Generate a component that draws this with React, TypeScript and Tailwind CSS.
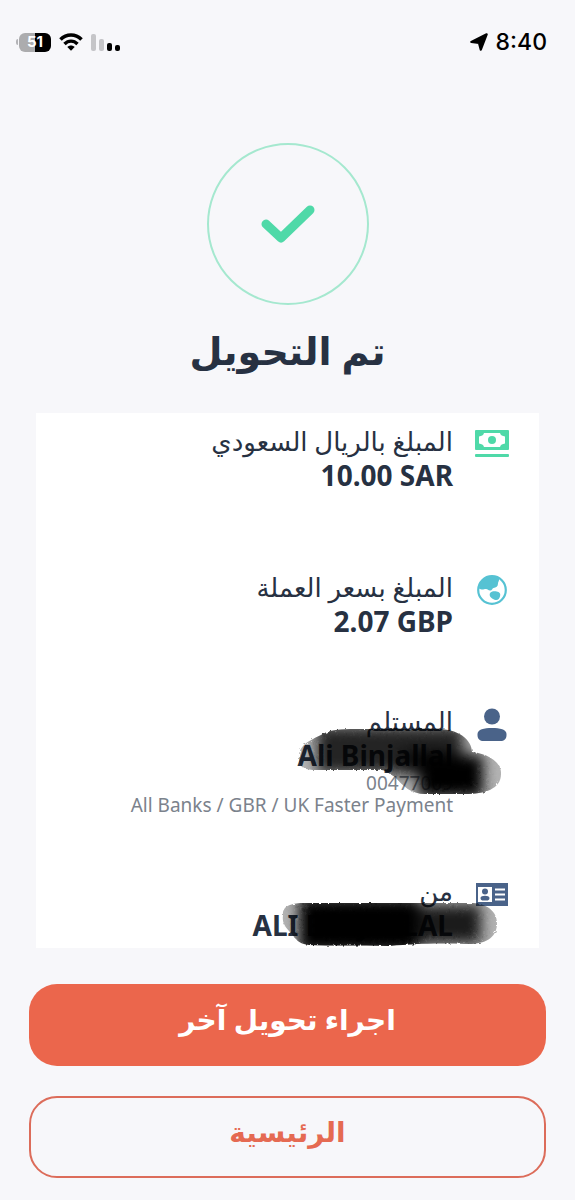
import { ReactNode } from "react";

type Transfer = {
  label: string;
  value: string;
  icon: ReactNode;
  spacing: string;
  notes?: string[];
  cover?: ReactNode;
};

const CashIcon = () => (
  <svg viewBox="0 0 34 28" className="w-[34px]" aria-hidden="true">
    <rect width="34" height="20" rx="1" fill="#4fd9a8" />
    <path
      d="M9 3h16c.5 2.500 2.500 3 5 3.500v7c-2.500.5-4.500 1-5 3.500H9c-.5-2.500-2.500-3-5-3.500v-7C6.500 6 8.500 5.500 9 3z"
      fill="#fff"
    />
    <circle cx="17" cy="10" r="4" fill="#4fd9a8" />
    <rect y="24" width="34" height="3" rx="1" fill="#4fd9a8" />
  </svg>
);

const GlobeIcon = () => (
  <svg viewBox="0 0 30 30" className="w-[30px]" aria-hidden="true">
    <circle cx="15" cy="15" r="13.800" fill="#fff" stroke="#56c2d3" strokeWidth="2.200" />
    <path
      d="M2 13.500C2 7 8 1.500 15 1.500c3 0 5 .5 7 2 .5 2-1 3.500-1 5 0 3-2 4-4.500 4.500-1.500.4-1 2.500-3.500 2.500-2 0-2-1.500-4-1.500-2.500 0-3.500 1.500-7-.5z"
      fill="#56c2d3"
    />
    <path
      d="M13.500 17.500c2-2 6-1.500 8-.5 2 1.200 2 2.500 1.500 4.500s-2 4-4.500 3.500c-1.500-.3-2.500-1-4-2-2-1.300-2.500-4-1-5.500z"
      fill="#56c2d3"
    />
  </svg>
);

const PersonIcon = () => (
  <svg viewBox="0 0 30 34" className="w-[30px]" aria-hidden="true">
    <circle cx="15" cy="9.500" r="8" fill="#4a6389" />
    <path
      d="M.5 27c0-4.500 6.500-6 14.500-6s14.500 1.500 14.500 6v1c0 4-2.500 6-6 6h-17c-3.500 0-6-2-6-6z"
      fill="#4a6389"
    />
  </svg>
);

const IdCardIcon = () => (
  <svg viewBox="0 0 34 24" className="w-[34px]" aria-hidden="true">
    <rect x="1" y="1" width="32" height="23" fill="#4a6389" />
    <rect x="3" y="5" width="14" height="15" fill="#fff" />
    <circle cx="10" cy="9.500" r="3" fill="#4a6389" />
    <path d="M5.500 16c0-3 9-3 9 0s-2.500 2.500-4.500 2.500-4.500.5-4.500-2.500z" fill="#4a6389" />
    <path d="M20 7.500h10M20 12.500h10M20 17.500h10" stroke="#fff" strokeWidth="2" />
  </svg>
);

// Rough marker edge shared by both hidden names
const BrushFilter = ({ id }: { id: string }) => (
  <filter id={id} x="-10%" y="-20%" width="120%" height="140%">
    <feTurbulence type="fractalNoise" baseFrequency="0.3" numOctaves="2" result="noise" />
    <feDisplacementMap in="SourceGraphic" in2="noise" scale="3" />
    <feGaussianBlur stdDeviation="0.6" />
  </filter>
);

const SoftFilter = ({ id }: { id: string }) => (
  <filter id={id} filterUnits="userSpaceOnUse" x="-20" y="-40" width="280" height="160">
    <feGaussianBlur stdDeviation="7" />
  </filter>
);

const RecipientCover = () => (
  <svg
    viewBox="0 0 220 80"
    className="absolute right-0 top-[20px] w-[220px]"
    aria-hidden="true"
  >
    <defs>
      <BrushFilter id="brush-recipient" />
      <SoftFilter id="soft-recipient" />
      <clipPath id="shape-recipient">
        <path d="M10 35C9 21 20 17 32 11C42 4 60 5 80 5H145C168 4 183 15 183 28C200 30 213 39 212 50C212 65 196 70 176 70H136C122 70 114 62 106 53C98 49 96 45 88 46H28C16 46 10 44 10 35z" />
      </clipPath>
    </defs>
    <g filter="url(#brush-recipient)">
      <g clipPath="url(#shape-recipient)">
        <rect width="220" height="80" fill="#000" opacity="0.3" />
        <g filter="url(#soft-recipient)" fill="none" stroke="#000">
          <path d="M28 26H174" strokeWidth="46" opacity="0.8" />
          <path d="M130 52H194" strokeWidth="42" />
          <path d="M112 38H160" strokeWidth="26" opacity="0.6" />
        </g>
      </g>
    </g>
  </svg>
);

const SenderCover = () => (
  <svg
    viewBox="0 0 240 50"
    className="absolute right-0 top-[25px] w-[240px]"
    aria-hidden="true"
  >
    <defs>
      <BrushFilter id="brush-sender" />
      <SoftFilter id="soft-sender" />
      <clipPath id="shape-sender">
        <path d="M14 16C13 6 24 4 36 4H204C220 5 229 14 228 26C227 39 216 45 200 45C160 44 148 45 120 47C90 46 60 47 40 46C28 45 26 38 20 32C15 27 13 22 14 16z" />
      </clipPath>
    </defs>
    <g filter="url(#brush-sender)">
      <g clipPath="url(#shape-sender)">
        <rect width="240" height="50" fill="#000" opacity="0.3" />
        <g filter="url(#soft-sender)" fill="none" stroke="#000">
          <path d="M30 26H150" strokeWidth="54" />
          <path d="M140 25H212" strokeWidth="38" opacity="0.85" />
        </g>
      </g>
    </g>
  </svg>
);

const transfers: Transfer[] = [
  {
    label: "المبلغ بالريال السعودي",
    value: "10.00 SAR",
    icon: <CashIcon />,
    spacing: "",
  },
  {
    label: "المبلغ بسعر العملة",
    value: "2.07 GBP",
    icon: <GlobeIcon />,
    spacing: "mt-[78px]",
  },
  {
    label: "المستلم",
    value: "Ali Binjallal",
    icon: <PersonIcon />,
    spacing: "mt-[66px]",
    notes: ["00477009", "All Banks / GBR / UK Faster Payment"],
    cover: <RecipientCover />,
  },
  {
    label: "من",
    value: "ALI BINJALLAL",
    icon: <IdCardIcon />,
    spacing: "mt-[58px]",
    cover: <SenderCover />,
  },
];

const StatusBar = () => (
  <header className="flex h-[84px] items-center justify-between px-7">
    <div className="flex items-center gap-2">
      <span dir="ltr" className="font-['Inter'] text-[23px] font-medium leading-7 text-black">
        8:40
      </span>
      <svg viewBox="0 0 20 20" className="w-[18px]" aria-hidden="true">
        <path
          d="M1.500 10L18.500 1.500 12 18.500 10 11z"
          fill="#000"
          stroke="#000"
          strokeWidth="2.500"
          strokeLinejoin="round"
        />
      </svg>
    </div>
    <div dir="ltr" className="-ml-3 flex items-center gap-2">
      <div className="flex items-center gap-px">
        <span className="h-1.5 w-0.5 rounded-l bg-[#b4b4b7]" />
        <span className="flex h-[19px] w-8 items-center justify-center rounded-md bg-linear-to-r from-[#acacae] from-50% to-black to-50% font-['Inter'] text-[15px] font-bold text-white">
          51
        </span>
      </div>
      <svg viewBox="0 0 24 18" className="w-6" fill="none" stroke="#000" aria-hidden="true">
        <path d="M1.500 6.500C7.500.5 16.500.5 22.500 6.500" strokeWidth="3.600" />
        <path d="M5.500 11c3.800-3.800 9.200-3.800 13 0" strokeWidth="3.400" />
        <path d="M8.300 14c2.200-2 5.200-2 7.400 0L12 17.800z" fill="#000" stroke="none" />
      </svg>
      <div className="flex h-[17px] items-end gap-[3px]">
        <span className="h-full w-[5px] rounded-xs bg-[#c5c5c8]" />
        <span className="h-3 w-[5px] rounded-xs bg-[#c5c5c8]" />
        <span className="h-2 w-[5px] rounded-xs bg-black" />
        <span className="h-1.5 w-[5px] rounded-xs bg-black" />
      </div>
    </div>
  </header>
);

const TransferRow = ({ row }: { row: Transfer }) => (
  <div className={`relative flex items-start gap-[22px] ${row.spacing}`}>
    <div className="flex h-10 w-[34px] shrink-0 items-center justify-center">{row.icon}</div>
    <dl className="min-w-0 flex-1">
      <dt className="text-[26px] leading-[34px] text-[#273142]">{row.label}</dt>
      <dd dir="ltr" className="text-right text-[28px] font-bold leading-[34px] text-[#273142]">
        {row.value}
      </dd>
      {row.notes?.map((note) => (
        <dd key={note} dir="ltr" className="text-right text-[19px] leading-[22px] text-[#7b828c]">
          {note}
        </dd>
      ))}
    </dl>
    {row.cover}
  </div>
);

const App = () => {
  return (
    <div
      dir="rtl"
      lang="ar"
      className="min-h-screen bg-[#f7f7fa] font-['Noto_Sans','DejaVu_Sans',sans-serif]"
    >
      <StatusBar />
      <main>
        <div className="mx-auto mt-[59px] flex size-[162px] items-center justify-center rounded-full border-2 border-[#a5e8cf]">
          <svg viewBox="0 0 54 40" className="w-[54px]" fill="none" aria-hidden="true">
            <path
              d="M5 20L20 34L49 6"
              stroke="#4fd9a8"
              strokeWidth="9"
              strokeLinecap="round"
              strokeLinejoin="round"
            />
          </svg>
        </div>
        <h1 className="mt-[17px] text-center text-[38px] font-bold leading-[56px] text-[#273142]">
          تم التحويل
        </h1>
        <section className="mx-9 mt-[35px] bg-white px-[30px] pb-1.5 pt-[11px]">
          {transfers.map((row) => (
            <TransferRow key={row.label} row={row} />
          ))}
        </section>
        <div className="mx-[29px] mt-9 flex flex-col gap-[30px] pb-[22px]">
          <button className="h-[82px] rounded-[28px] bg-[#eb664c] pb-3 text-[28px] font-bold text-white">
            اجراء تحويل آخر
          </button>
          <button className="h-[82px] rounded-[28px] border-2 border-[#dc6c5a] pb-3 text-[28px] font-bold text-[#e56a52]">
            الرئيسية
          </button>
        </div>
      </main>
    </div>
  );
};

export default App;
